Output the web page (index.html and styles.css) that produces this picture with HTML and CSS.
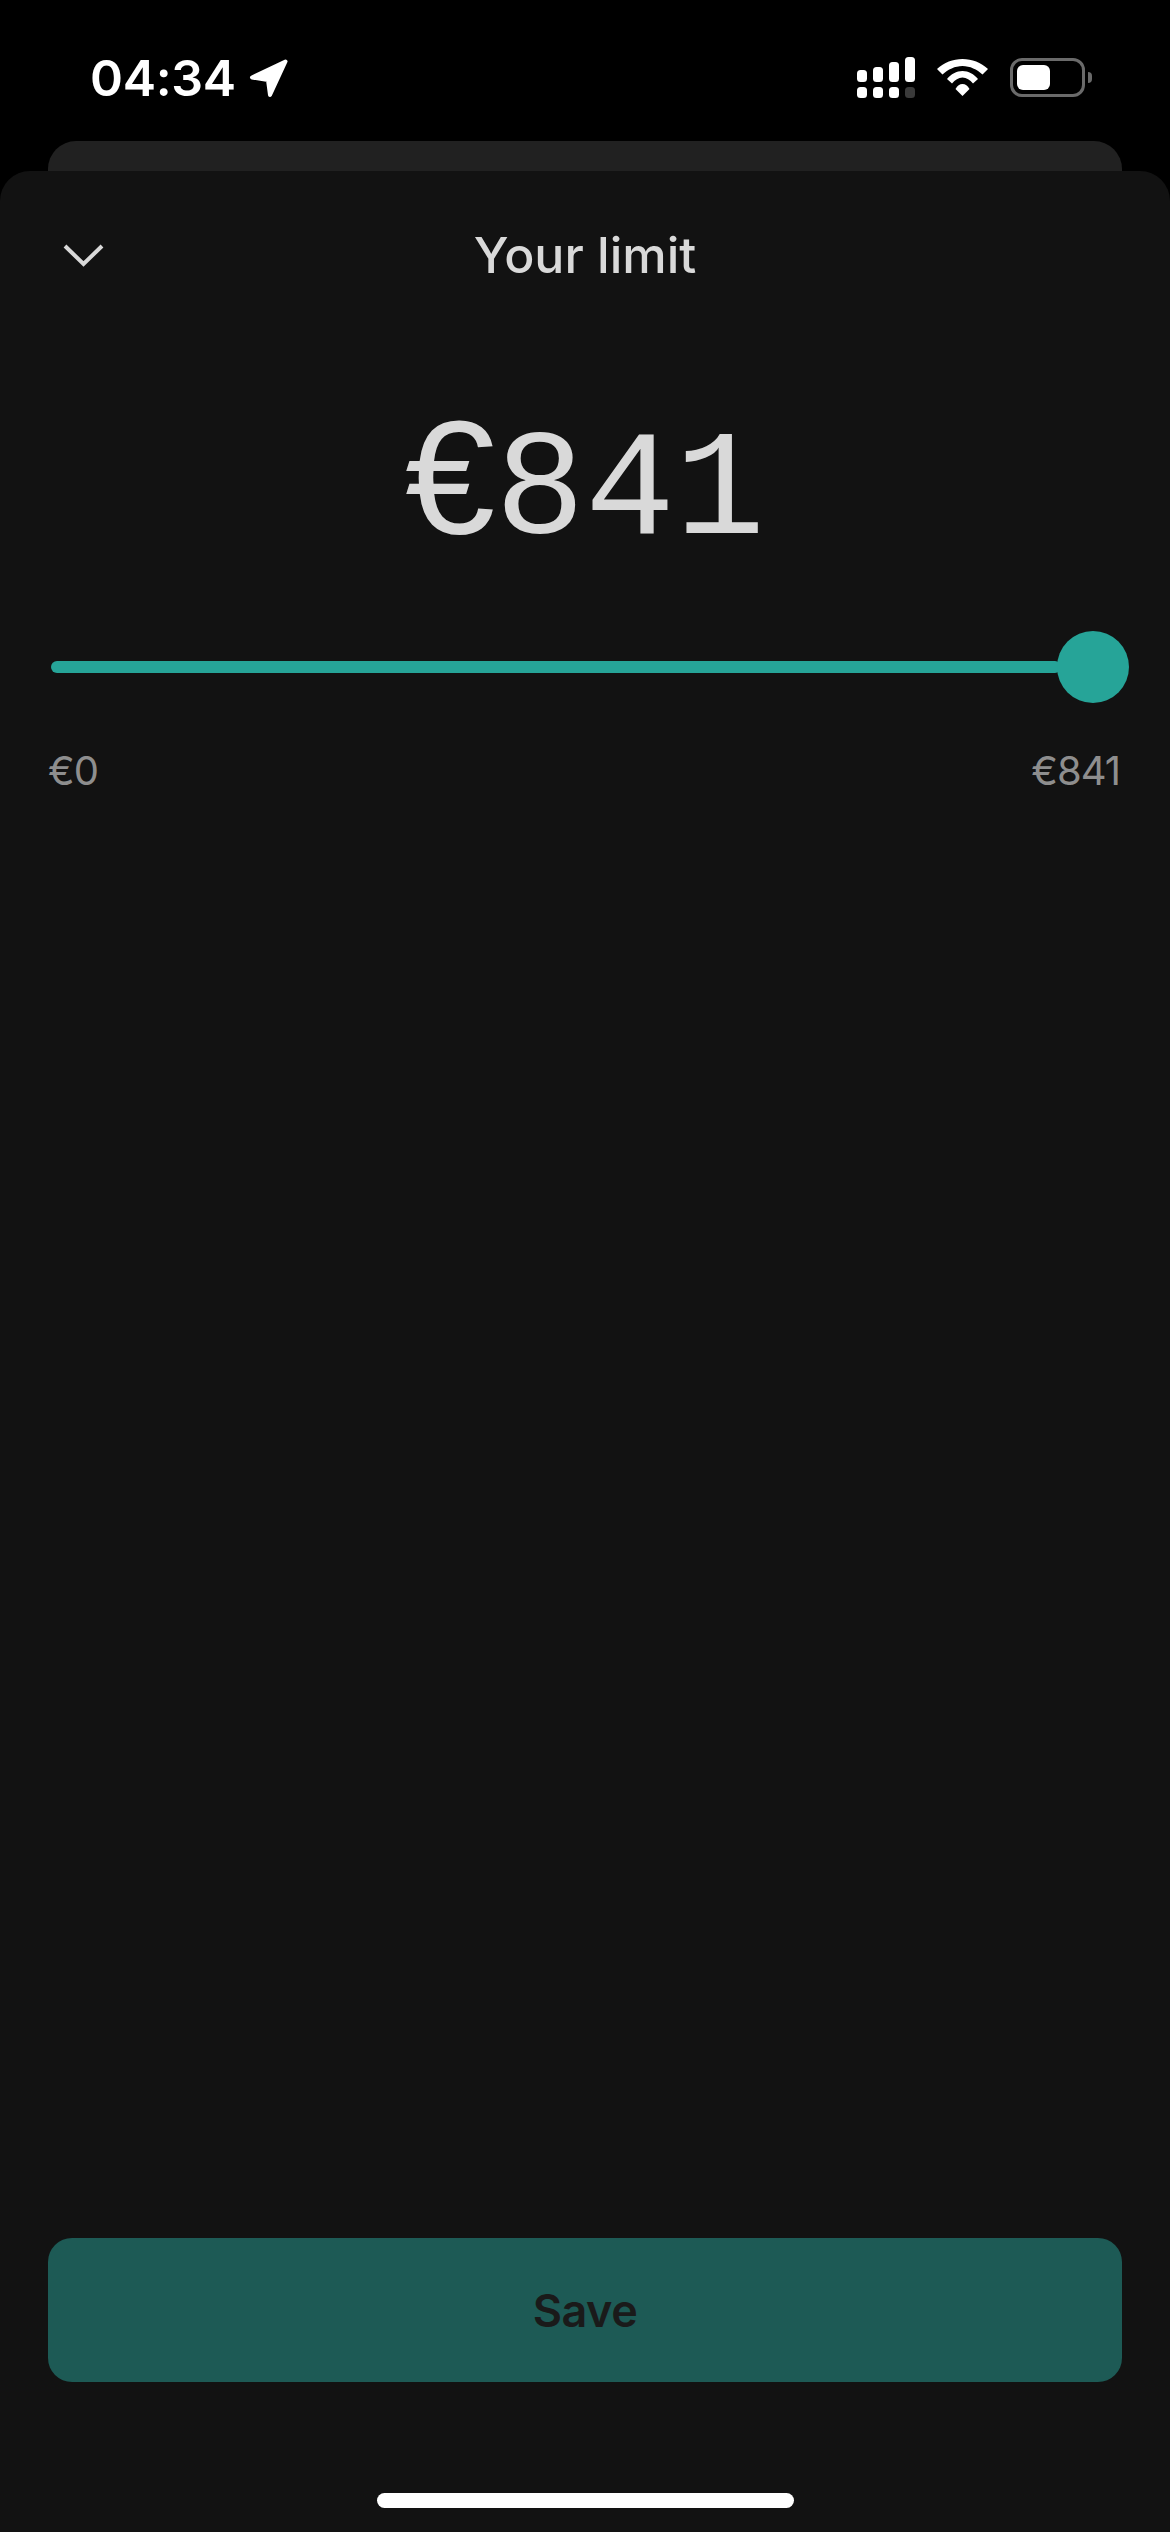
FILE: index.html
```html
<!DOCTYPE html>
<html lang="en">
<head>
    <meta charset="UTF-8">
    <meta name="viewport" content="width=device-width, initial-scale=1.0">
    <title>Your limit</title>
    <link rel="stylesheet" href="styles.css">
</head>
<body>

<div class="status-bar">
    <div class="status-left">
        <span class="time">04:34</span>
        <svg class="location" width="41" height="41" viewBox="0 0 41 41">
            <path d="M37.5 3.5 L4 19.5 L20 22 L22 37 Z" fill="#fff" stroke="#fff" stroke-width="4" stroke-linejoin="round"/>
        </svg>
    </div>
    <div class="status-right">
        <svg class="signal" width="58" height="41" viewBox="0 0 58 41">
            <rect x="0" y="13" width="10" height="12" rx="3.5" fill="#fff"/>
            <rect x="16" y="10" width="10" height="15" rx="3.5" fill="#fff"/>
            <rect x="32" y="5" width="10" height="20" rx="3.5" fill="#fff"/>
            <rect x="48" y="0" width="10" height="25" rx="3.5" fill="#fff"/>
            <rect x="0" y="30" width="10" height="11" rx="3.5" fill="#fff"/>
            <rect x="16" y="30" width="10" height="11" rx="3.5" fill="#fff"/>
            <rect x="32" y="30" width="10" height="11" rx="3.5" fill="#fff"/>
            <rect x="48" y="30" width="10" height="11" rx="3.5" fill="#3a3a3a"/>
        </svg>
        <svg class="wifi" width="51" height="37" viewBox="0 0 51 37">
            <path d="M0 10 C7 3.5 16 0 25.5 0 C35 0 44 3.5 51 10 L45.5 15.5 C40 10.5 33 7 25.5 7 C18 7 11 10.5 5.5 15.5 Z" fill="#fff"/>
            <path d="M10 20 C14 15 19.5 12 25.5 12 C31.5 12 37 15 41 20 L36 24.5 C33 21 29.5 18.5 25.5 18.5 C21.5 18.5 18 21 15 24.5 Z" fill="#fff"/>
            <path d="M25.5 25 C22.5 25 20.5 26.5 18.5 30 L25.5 37 L32.5 30 C30.5 26.5 28.5 25 25.5 25 Z" fill="#fff"/>
        </svg>
        <div class="battery">
            <div class="battery-body">
                <div class="battery-fill"></div>
            </div>
            <div class="battery-nub"></div>
        </div>
    </div>
</div>

<div class="back-sheet"></div>

<div class="sheet">
    <div class="sheet-header">
        <svg class="chevron" width="41" height="24" viewBox="0 0 41 24">
            <path d="M2 3 L20.5 21 L39 3" fill="none" stroke="#d9d9d9" stroke-width="4"/>
        </svg>
        <div class="sheet-title">Your limit</div>
    </div>

    <div class="amount"><span class="amount-currency">€</span>841</div>

    <div class="slider">
        <div class="slider-track"></div>
        <div class="slider-thumb"></div>
    </div>

    <div class="slider-labels">
        <span>€0</span>
        <span>€841</span>
    </div>

    <button class="save-button">Save</button>
    <div class="home-bar"></div>
</div>

</body>
</html>
```

FILE: styles.css
```css
html, body {
    height: 100%;
}

body {
    margin: 0;
    height: 2532px;
    background-color: #000;
    display: flex;
    flex-direction: column;
    font-family: Inter, "Liberation Sans", Arial, sans-serif;
    overflow: hidden;
}

.status-bar {
    height: 141px;
    flex-shrink: 0;
    display: flex;
    justify-content: space-between;
    padding: 0 78px 0 90px;
    box-sizing: border-box;
}

.status-left {
    display: flex;
    align-items: flex-start;
    padding-top: 50px;
}

.time {
    font-size: 50px;
    font-weight: 600;
    line-height: 56px;
    letter-spacing: -0.3px;
    color: #fff;
}

.location {
    margin: 8px 0 0 12px;
}

.status-right {
    display: flex;
    align-items: flex-start;
    padding-top: 57px;
}

.wifi {
    margin: 2px 0 0 22px;
}

.battery {
    display: flex;
    align-items: center;
    margin: 1px 0 0 22px;
}

.battery-body {
    width: 75px;
    height: 39px;
    padding: 4px;
    box-sizing: border-box;
    border: 3px solid #6a6a6a;
    border-radius: 12px;
}

.battery-fill {
    width: 33px;
    height: 100%;
    background-color: #fff;
    border-radius: 6px;
}

.battery-nub {
    width: 4px;
    height: 11px;
    margin-left: 3px;
    background-color: #6a6a6a;
    border-radius: 0 5px 5px 0;
}

.back-sheet {
    height: 30px;
    flex-shrink: 0;
    margin: 0 48px 0 48px;
    background-color: #212121;
    border-radius: 28px 28px 0 0;
}

.sheet {
    flex: 1;
    display: flex;
    flex-direction: column;
    padding: 0 48px;
    background-color: #121212;
    border-radius: 30px 30px 0 0;
}

.sheet-header {
    display: grid;
    grid-template-columns: 1fr auto 1fr;
    align-items: center;
    height: 60px;
    margin-top: 54px;
}

.chevron {
    margin-left: 15px;
}

.sheet-title {
    font-size: 50px;
    font-weight: 500;
    line-height: 60px;
    color: #d9d9d9;
}

.amount {
    margin-top: 107px;
    font-family: "Liberation Mono", "Courier New", monospace;
    font-size: 150px;
    line-height: 170px;
    text-align: center;
    color: #d9d9d9;
}

.amount-currency {
    font-family: "Liberation Sans", Arial, sans-serif;
    font-size: 162px;
}

.slider {
    display: flex;
    align-items: center;
    margin: 53px -7px 0 3px;
}

.slider-track {
    flex: 1;
    height: 12px;
    margin-right: -4px;
    background-color: #26a498;
    border-radius: 6px;
}

.slider-thumb {
    width: 72px;
    height: 72px;
    flex-shrink: 0;
    background-color: #26a498;
    border-radius: 50%;
}

.slider-labels {
    display: flex;
    justify-content: space-between;
    margin-top: 45px;
    padding-right: 2px;
    font-size: 40px;
    letter-spacing: -1px;
    line-height: 46px;
    color: #8e8e8e;
}

.save-button {
    display: block;
    width: 100%;
    height: 144px;
    margin-top: auto;
    padding: 0;
    border: none;
    border-radius: 24px;
    background-color: #1d5a55;
    color: #1a1a1a;
    font-family: Inter, "Liberation Sans", Arial, sans-serif;
    font-size: 45px;
    font-weight: 600;
    letter-spacing: -0.5px;
}

.home-bar {
    width: 417px;
    height: 15px;
    margin: 111px 0 24px 329px;
    background-color: #fff;
    border-radius: 8px;
}
```
